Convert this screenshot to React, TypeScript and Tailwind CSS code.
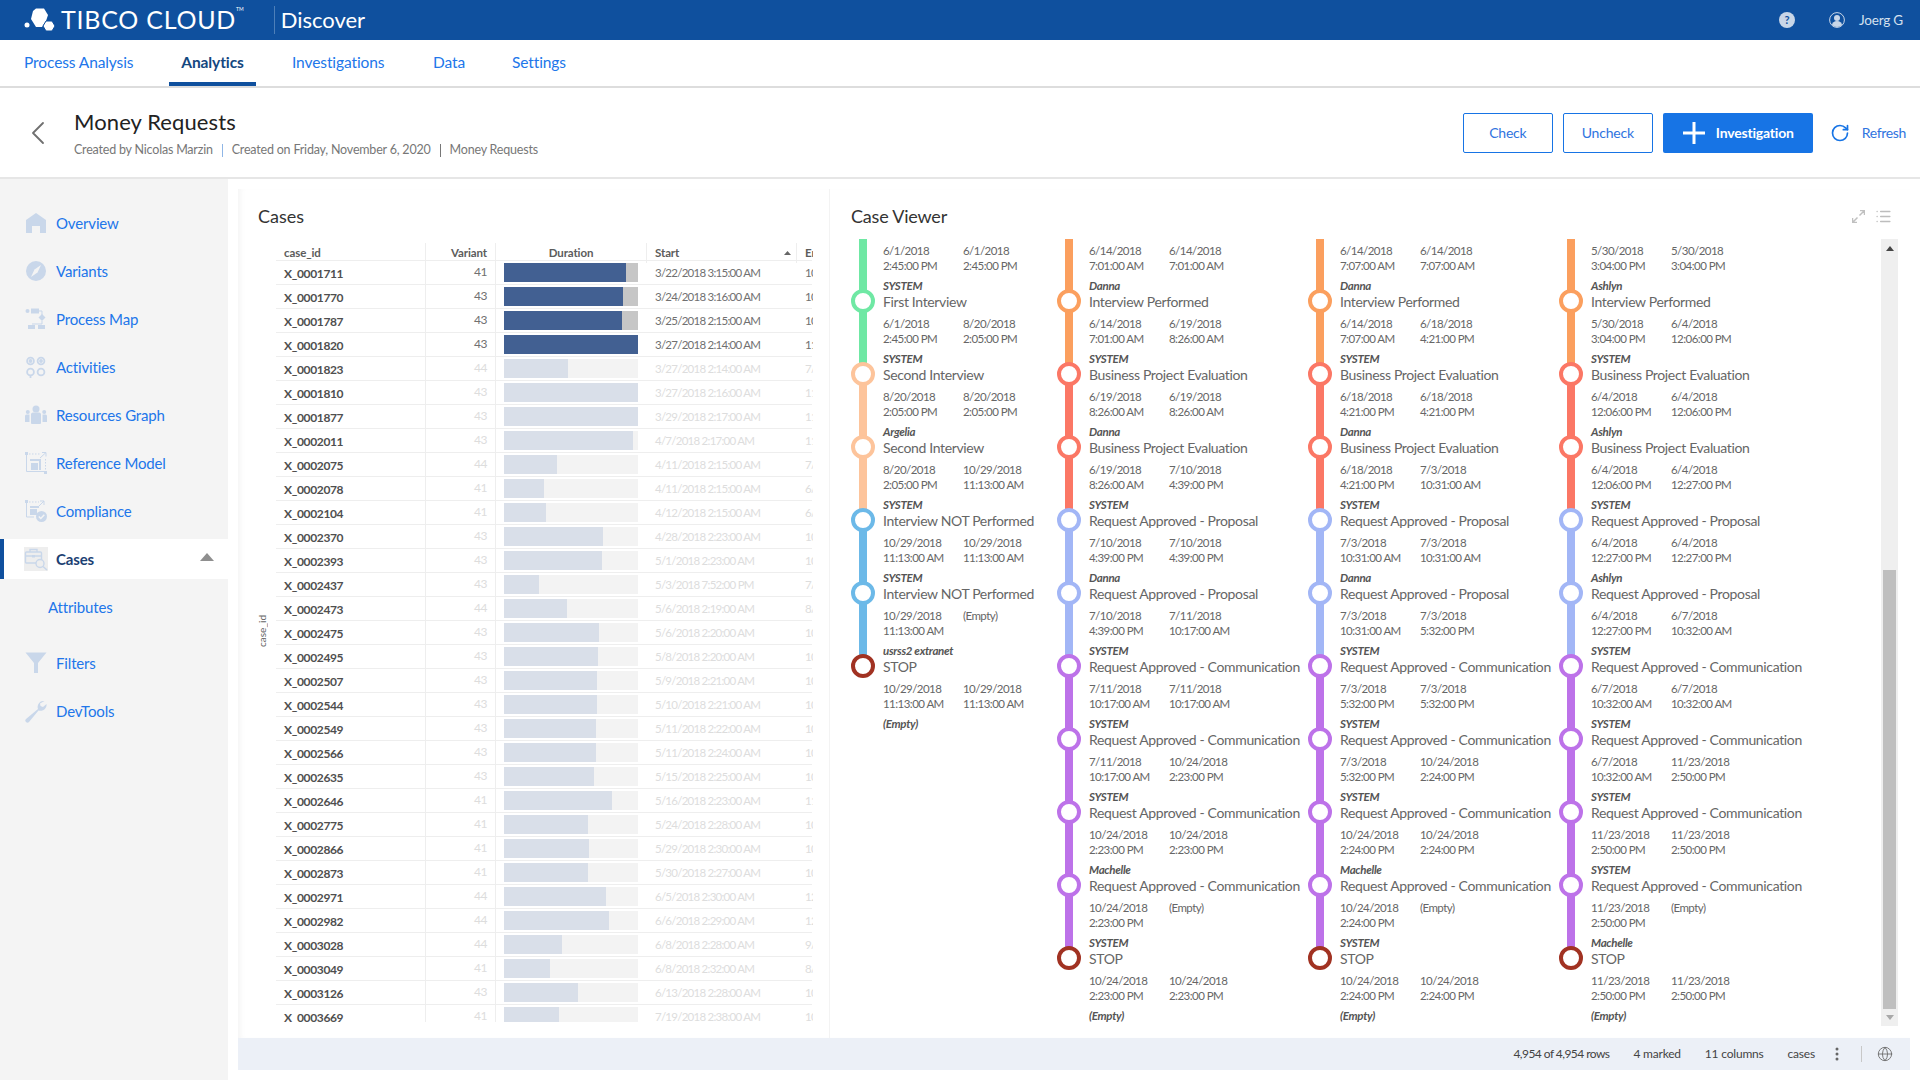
import React from "react";
import { Globe, List, RotateCw, ChevronLeft } from "lucide-react";

const rows: [string, number, number, string, string][] = [
  ["X_0001711", 41, 0.91, "3/22/2018 3:15:00 AM", "10/5/2018"],
  ["X_0001770", 43, 0.89, "3/24/2018 3:16:00 AM", "10/5/2018"],
  ["X_0001787", 43, 0.88, "3/25/2018 2:15:00 AM", "10/5/2018"],
  ["X_0001820", 43, 1, "3/27/2018 2:14:00 AM", "11/5/2018"],
  ["X_0001823", 44, 0.477, "3/27/2018 2:14:00 AM", "7/5/2018"],
  ["X_0001810", 43, 1, "3/27/2018 2:16:00 AM", "11/5/2018"],
  ["X_0001877", 43, 1, "3/29/2018 2:17:00 AM", "11/5/2018"],
  ["X_0002011", 43, 0.963, "4/7/2018 2:17:00 AM", "11/5/2018"],
  ["X_0002075", 44, 0.395, "4/11/2018 2:15:00 AM", "7/5/2018"],
  ["X_0002078", 41, 0.298, "4/11/2018 2:15:00 AM", "6/5/2018"],
  ["X_0002104", 41, 0.314, "4/12/2018 2:15:00 AM", "6/5/2018"],
  ["X_0002370", 43, 0.738, "4/28/2018 2:23:00 AM", "10/5/2018"],
  ["X_0002393", 43, 0.733, "5/1/2018 2:23:00 AM", "10/5/2018"],
  ["X_0002437", 43, 0.262, "5/3/2018 7:52:00 PM", "7/5/2018"],
  ["X_0002473", 44, 0.471, "5/6/2018 2:19:00 AM", "8/5/2018"],
  ["X_0002475", 43, 0.709, "5/6/2018 2:20:00 AM", "10/5/2018"],
  ["X_0002495", 43, 0.702, "5/8/2018 2:20:00 AM", "10/5/2018"],
  ["X_0002507", 43, 0.694, "5/9/2018 2:21:00 AM", "10/5/2018"],
  ["X_0002544", 43, 0.694, "5/10/2018 2:21:00 AM", "10/5/2018"],
  ["X_0002549", 43, 0.686, "5/11/2018 2:22:00 AM", "10/5/2018"],
  ["X_0002566", 43, 0.686, "5/11/2018 2:24:00 AM", "10/5/2018"],
  ["X_0002635", 43, 0.673, "5/15/2018 2:25:00 AM", "10/5/2018"],
  ["X_0002646", 41, 0.806, "5/16/2018 2:23:00 AM", "11/5/2018"],
  ["X_0002775", 41, 0.628, "5/24/2018 2:28:00 AM", "10/5/2018"],
  ["X_0002866", 41, 0.634, "5/29/2018 2:30:00 AM", "10/5/2018"],
  ["X_0002873", 41, 0.628, "5/30/2018 2:27:00 AM", "10/5/2018"],
  ["X_0002971", 44, 0.762, "6/5/2018 2:30:00 AM", "12/5/2018"],
  ["X_0002982", 44, 0.783, "6/6/2018 2:29:00 AM", "12/5/2018"],
  ["X_0003028", 44, 0.432, "6/8/2018 2:28:00 AM", "9/5/2018"],
  ["X_0003049", 41, 0.343, "6/8/2018 2:32:00 AM", "8/5/2018"],
  ["X_0003126", 43, 0.552, "6/13/2018 2:28:00 AM", "10/5/2018"],
  ["X_0003669", 41, 0.411, "7/19/2018 2:38:00 AM", "10/5/2018"],
];

const C = {
  green: "#6fe8a4",
  peach: "#fdc49b",
  blue: "#6cb9e8",
  red: "#a13222",
  orange: "#fb9f5e",
  coral: "#fb7765",
  peri: "#a2b6f6",
  purple: "#bd72e9",
};

type S = { a: string; b: string; c: string; d: string; who: string; act: string; col: string };
const st = (a: string, b: string, c: string, d: string, who: string, act: string, col: string): S => ({ a, b, c, d, who, act, col });
const BPE = "Business Project Evaluation";
const RAP = "Request Approved - Proposal";
const RAC = "Request Approved - Communication";
const IP = "Interview Performed";

const c1: S[] = [
  st("6/1/2018", "2:45:00 PM", "6/1/2018", "2:45:00 PM", "SYSTEM", "First Interview", C.green),
  st("6/1/2018", "2:45:00 PM", "8/20/2018", "2:05:00 PM", "SYSTEM", "Second Interview", C.peach),
  st("8/20/2018", "2:05:00 PM", "8/20/2018", "2:05:00 PM", "Argelia", "Second Interview", C.peach),
  st("8/20/2018", "2:05:00 PM", "10/29/2018", "11:13:00 AM", "SYSTEM", "Interview NOT Performed", C.blue),
  st("10/29/2018", "11:13:00 AM", "10/29/2018", "11:13:00 AM", "SYSTEM", "Interview NOT Performed", C.blue),
  st("10/29/2018", "11:13:00 AM", "(Empty)", "", "usrss2 extranet", "STOP", C.red),
];
const c2: S[] = [
  st("6/14/2018", "7:01:00 AM", "6/14/2018", "7:01:00 AM", "Danna", IP, C.orange),
  st("6/14/2018", "7:01:00 AM", "6/19/2018", "8:26:00 AM", "SYSTEM", BPE, C.coral),
  st("6/19/2018", "8:26:00 AM", "6/19/2018", "8:26:00 AM", "Danna", BPE, C.coral),
  st("6/19/2018", "8:26:00 AM", "7/10/2018", "4:39:00 PM", "SYSTEM", RAP, C.peri),
  st("7/10/2018", "4:39:00 PM", "7/10/2018", "4:39:00 PM", "Danna", RAP, C.peri),
  st("7/10/2018", "4:39:00 PM", "7/11/2018", "10:17:00 AM", "SYSTEM", RAC, C.purple),
  st("7/11/2018", "10:17:00 AM", "7/11/2018", "10:17:00 AM", "SYSTEM", RAC, C.purple),
  st("7/11/2018", "10:17:00 AM", "10/24/2018", "2:23:00 PM", "SYSTEM", RAC, C.purple),
  st("10/24/2018", "2:23:00 PM", "10/24/2018", "2:23:00 PM", "Machelle", RAC, C.purple),
  st("10/24/2018", "2:23:00 PM", "(Empty)", "", "SYSTEM", "STOP", C.red),
];
const c3: S[] = [
  st("6/14/2018", "7:07:00 AM", "6/14/2018", "7:07:00 AM", "Danna", IP, C.orange),
  st("6/14/2018", "7:07:00 AM", "6/18/2018", "4:21:00 PM", "SYSTEM", BPE, C.coral),
  st("6/18/2018", "4:21:00 PM", "6/18/2018", "4:21:00 PM", "Danna", BPE, C.coral),
  st("6/18/2018", "4:21:00 PM", "7/3/2018", "10:31:00 AM", "SYSTEM", RAP, C.peri),
  st("7/3/2018", "10:31:00 AM", "7/3/2018", "10:31:00 AM", "Danna", RAP, C.peri),
  st("7/3/2018", "10:31:00 AM", "7/3/2018", "5:32:00 PM", "SYSTEM", RAC, C.purple),
  st("7/3/2018", "5:32:00 PM", "7/3/2018", "5:32:00 PM", "SYSTEM", RAC, C.purple),
  st("7/3/2018", "5:32:00 PM", "10/24/2018", "2:24:00 PM", "SYSTEM", RAC, C.purple),
  st("10/24/2018", "2:24:00 PM", "10/24/2018", "2:24:00 PM", "Machelle", RAC, C.purple),
  st("10/24/2018", "2:24:00 PM", "(Empty)", "", "SYSTEM", "STOP", C.red),
];
const c4: S[] = [
  st("5/30/2018", "3:04:00 PM", "5/30/2018", "3:04:00 PM", "Ashlyn", IP, C.orange),
  st("5/30/2018", "3:04:00 PM", "6/4/2018", "12:06:00 PM", "SYSTEM", BPE, C.coral),
  st("6/4/2018", "12:06:00 PM", "6/4/2018", "12:06:00 PM", "Ashlyn", BPE, C.coral),
  st("6/4/2018", "12:06:00 PM", "6/4/2018", "12:27:00 PM", "SYSTEM", RAP, C.peri),
  st("6/4/2018", "12:27:00 PM", "6/4/2018", "12:27:00 PM", "Ashlyn", RAP, C.peri),
  st("6/4/2018", "12:27:00 PM", "6/7/2018", "10:32:00 AM", "SYSTEM", RAC, C.purple),
  st("6/7/2018", "10:32:00 AM", "6/7/2018", "10:32:00 AM", "SYSTEM", RAC, C.purple),
  st("6/7/2018", "10:32:00 AM", "11/23/2018", "2:50:00 PM", "SYSTEM", RAC, C.purple),
  st("11/23/2018", "2:50:00 PM", "11/23/2018", "2:50:00 PM", "SYSTEM", RAC, C.purple),
  st("11/23/2018", "2:50:00 PM", "(Empty)", "", "Machelle", "STOP", C.red),
];

function Dates({ a, b, c, d }: { a: string; b: string; c: string; d: string }) {
  return (
    <div className="grid grid-cols-[80px_80px] pt-[4px] text-[11.5px] leading-[15px] tracking-[-0.55px] text-[#666666] whitespace-nowrap">
      <div>{a}<br />{b}</div>
      <div>{c}<br />{d}</div>
    </div>
  );
}

function Timeline({ steps, w, end }: { steps: S[]; w: string; end: [string, string, string, string] }) {
  return (
    <div className={`${w} shrink-0`}>
      {steps.map((s, i) => {
        const prev = i === 0 ? s.col : steps[i - 1].col;
        const stop = s.act === "STOP";
        return (
          <div key={i} className="flex h-[73px]">
            <div className="relative w-6 shrink-0 flex flex-col items-center">
              <div className="w-2 h-[62px]" style={{ background: prev }} />
              {!stop && <div className="w-2 flex-1" style={{ background: s.col }} />}
              <div className="absolute left-0 top-[50px] size-6 rounded-full border-4 bg-white" style={{ borderColor: s.col }} />
            </div>
            <div className="ml-2 min-w-0">
              <Dates a={s.a} b={s.b} c={s.c} d={s.d} />
              <div className="mt-[5px] text-[11.5px] leading-[16px] font-bold italic tracking-[-0.3px] text-[#555555] whitespace-nowrap">{s.who}</div>
              <div className="text-[14px] leading-[16px] tracking-[-0.35px] text-[#666666] whitespace-nowrap">{s.act}</div>
            </div>
          </div>
        );
      })}
      <div className="ml-8">
        <Dates a={end[0]} b={end[1]} c={end[2]} d={end[3]} />
        <div className="mt-[5px] text-[11.5px] leading-[16px] font-bold italic tracking-[-0.3px] text-[#555555]">(Empty)</div>
      </div>
    </div>
  );
}

const ic = "#c9d7ea";
const icons: Record<string, React.ReactNode> = {
  home: <path d="M12 2 L22 9 V22 H16 V15 H8 V22 H2 V9 Z" fill={ic} />,
  compass: (
    <g>
      <circle cx="12" cy="12" r="10" fill={ic} />
      <path d="M17 6 L13.5 13.5 L7 18 L10.5 10.5 Z" fill="#f4f4f4" />
    </g>
  ),
  map: (
    <g fill={ic}>
      <circle cx="3.5" cy="4" r="2" />
      <rect x="7" y="1.5" width="8" height="5" />
      <path d="M14 4 h4 v4" stroke={ic} fill="none" />
      <path d="M18 7 l3.5 3.5 -3.5 3.5 -3.5 -3.5 z" />
      <path d="M18 14 v3 M8 17 h10" stroke={ic} fill="none" />
      <rect x="4" y="18" width="7" height="4" />
      <rect x="14" y="18" width="7" height="4" />
    </g>
  ),
  act: (
    <g fill="none" stroke={ic} strokeWidth="1.8">
      <circle cx="6.5" cy="6" r="3.4" />
      <circle cx="17" cy="6" r="3.4" />
      <circle cx="6.5" cy="17" r="3.4" />
      <circle cx="17" cy="17" r="3.4" />
      <circle cx="6.5" cy="6" r="1" fill={ic} />
      <circle cx="17" cy="6" r="1" fill={ic} />
      <path d="M6.5 20.5 V23" />
    </g>
  ),
  people: (
    <g fill={ic}>
      <circle cx="12" cy="6" r="3.5" />
      <path d="M7 11 a2 2 0 0 1 2 -1.5 h6 a2 2 0 0 1 2 1.5 v9 a1 1 0 0 1 -1 1 h-8 a1 1 0 0 1 -1 -1 z" />
      <circle cx="3.8" cy="9" r="2" />
      <circle cx="20.2" cy="9" r="2" />
      <path d="M1 13 a1.5 1.5 0 0 1 1.5 -1.5 h3 V19 H1 z M18.5 11.5 h3 a1.5 1.5 0 0 1 1.5 1.5 V19 h-4.5 z" />
    </g>
  ),
  ref: (
    <g>
      <rect x="1" y="1" width="3" height="3" fill={ic} />
      <rect x="20" y="20" width="3" height="3" fill={ic} />
      <path d="M2.5 4 V20.5 H20" fill="none" stroke={ic} />
      <path d="M5 3 H17 M21.5 8 V19" fill="none" stroke={ic} strokeDasharray="1.5 1.5" />
      <path d="M16 7 L22 1.5 M18 1.5 H22 V5.5" fill="none" stroke={ic} />
      <path d="M6 8 H17 V19 H15 V10 H6 Z" fill={ic} />
      <rect x="7" y="12" width="7" height="7" fill={ic} />
    </g>
  ),
  comp: (
    <g>
      <rect x="1" y="1" width="3" height="3" fill={ic} />
      <path d="M2.5 4 V18 H10" fill="none" stroke={ic} />
      <path d="M5 3 H15" fill="none" stroke={ic} strokeDasharray="1.5 1.5" />
      <path d="M14 8 L20 2 M16 2 H20 V6" fill="none" stroke={ic} />
      <rect x="6" y="7" width="9" height="2" fill={ic} />
      <rect x="6" y="10" width="7" height="6" fill={ic} />
      <circle cx="17.5" cy="17.5" r="5.5" fill={ic} />
      <path d="M14.8 17.5 L16.8 19.5 L20.3 15.7" fill="none" stroke="#f4f4f4" strokeWidth="1.5" />
    </g>
  ),
  cases: (
    <g>
      <rect width="24" height="24" fill="#eeeeee" />
      <rect x="1.5" y="5" width="16" height="11" rx="1" fill="none" stroke={ic} strokeWidth="1.4" />
      <path d="M6 5 V2.5 H13 V5 M1.5 9 H17.5" fill="none" stroke={ic} strokeWidth="1.4" />
      <rect x="8" y="8" width="3" height="2.5" fill={ic} />
      <circle cx="16" cy="16.5" r="4" fill="#eeeeee" stroke={ic} strokeWidth="1.4" />
      <path d="M19 19.5 L23 23" stroke={ic} strokeWidth="1.6" />
    </g>
  ),
  filter: <path d="M1.5 1.5 H22.5 L14 12 V22 H10 V12 Z" fill={ic} />,
  wrench: (
    <path d="M20.5 2 a6 6 0 0 0 -6.5 8 L2 20 a2 2 0 0 0 3 3 L14.5 11.5 a6 6 0 0 0 8 -6.5 L19 8 L16.5 7 L16 4.5 Z" fill={ic} />
  ),
};

function NavItem({ icon, label, active }: { icon: string; label: string; active?: boolean }) {
  return (
    <div className="h-12 py-1">
      <div className={`flex items-center h-10 ${active ? "bg-white border-l-4 border-[#0f509e] pl-5" : "pl-6"}`}>
        <svg width="24" height="24" viewBox="0 0 24 24" className="shrink-0">{icons[icon]}</svg>
        <span className={`ml-[8px] text-[15px] tracking-[-0.15px] ${active ? "font-bold text-[#1c3f73]" : "text-[#2176ea]"}`}>{label}</span>
        {active && (
          <svg width="14" height="8" viewBox="0 0 14 8" className="ml-auto mr-[14px] mb-1"><path d="M7 0 L14 8 H0 Z" fill="#8f8f8f" /></svg>
        )}
      </div>
    </div>
  );
}

function Logo() {
  return (
    <svg width="34" height="24" viewBox="0 0 34 24" className="shrink-0">
      <path d="M9 3 L12 0.5 H20 L24 7 L22 13 L18 19 H12 L7 11 Z" fill="#fff" />
      <path d="M22 13 H28 L31 18 L28 23 H22 L19 18 Z" fill="#fff" stroke="#0f509e" strokeWidth="1" />
      <circle cx="3" cy="17" r="2.5" fill="#fff" />
    </svg>
  );
}

export default function App() {
  return (
    <div className="w-[1920px] h-[1080px] overflow-hidden flex flex-col bg-white [font-family:Lato,'Noto_Sans',sans-serif]">
      {/* Top bar */}
      <header className="h-10 shrink-0 bg-[#0f509e] flex items-center pl-6 pr-[17px] text-white">
        <Logo />
        <div className="ml-[3px] -mt-[2px] flex items-start">
          <span className="text-[25px] leading-none tracking-[0.75px] whitespace-nowrap">TIBCO CLOUD</span>
          <span className="text-[5px] leading-none">TM</span>
        </div>
        <div className="ml-[30px] h-7 w-px bg-[#4d7fb9]" />
        <span className="ml-[6px] -mt-[1px] text-[22px] tracking-[0px]">Discover</span>
        <div className="ml-auto flex items-center">
          <span className="size-4 rounded-full bg-[#c8d6e8] text-[#0f509e] text-[11px] font-bold flex items-center justify-center">?</span>
          <svg width="16" height="16" viewBox="0 0 16 16" className="ml-[34px]">
            <circle cx="8" cy="8" r="7.4" fill="none" stroke="#c8d6e8" strokeWidth="1" />
            <circle cx="8" cy="6" r="3" fill="#c8d6e8" />
            <path d="M3 13 a5 4 0 0 1 10 0 a7 7 0 0 1 -10 0 Z" fill="#c8d6e8" />
          </svg>
          <span className="ml-[14px] text-[13.5px] tracking-[-0.2px] text-[#d5e0ee]">Joerg G</span>
        </div>
      </header>

      {/* Tabs */}
      <nav className="h-[46px] shrink-0 flex items-stretch pl-6 text-[15.5px] tracking-[-0.1px] text-[#2176ea] border-b-2 border-[#dddddd] box-content">
        <div className="flex items-center w-[109px] whitespace-nowrap">Process Analysis</div>
        <div className="ml-9 w-[87px] flex items-center justify-center font-bold pt-[4px] text-[#14477f] border-b-4 border-[#0f509e]">Analytics</div>
        <div className="ml-9 flex items-center w-[93px] whitespace-nowrap">Investigations</div>
        <div className="ml-12 flex items-center w-[31px]">Data</div>
        <div className="ml-12 flex items-center">Settings</div>
      </nav>

      {/* Title strip */}
      <section className="h-[91px] shrink-0 flex items-center border-b-2 border-[#e6e6e6] pr-[14px]">
        <ChevronLeft className="ml-[18px] shrink-0" size={40} strokeWidth={1.1} color="#707070" />
        <div className="ml-[16px]">
          <div className="text-[22px] leading-[30px] tracking-[0.1px] text-[#222222]">Money Requests</div>
          <div className="mt-[5px] flex items-center text-[12.5px] leading-[16px] tracking-[-0.2px] text-[#777777]">
            <span>Created by Nicolas Marzin</span>
            <span className="mx-[9px] w-px h-[13px] bg-[#8fb6e6]" />
            <span>Created on Friday, November 6, 2020</span>
            <span className="mx-[9px] w-px h-[13px] bg-[#777777]" />
            <span>Money Requests</span>
          </div>
        </div>
        <div className="ml-auto flex items-center gap-[10px] text-[14px] tracking-[-0.2px]">
          <button className="w-[90px] h-10 rounded-[2px] border border-[#1774e5] text-[#2f74e0]">Check</button>
          <button className="w-[90px] h-10 rounded-[2px] border border-[#1774e5] text-[#2f74e0]">Uncheck</button>
          <button className="w-[150px] h-10 rounded-[2px] bg-[#1774e5] text-white font-bold flex items-center pl-[20px]">
            <svg width="22" height="22" viewBox="0 0 22 22" className="shrink-0"><path d="M11 0 V22 M0 11 H22" stroke="#fff" strokeWidth="3" /></svg>
            <span className="ml-[11px]">Investigation</span>
          </button>
          <RotateCw className="ml-[7px]" size={20} strokeWidth={2} color="#1774e5" />
          <span className="ml-[2px] tracking-[-0.35px] text-[#2f74e0]">Refresh</span>
        </div>
      </section>

      {/* Body */}
      <div className="flex-1 min-h-0 flex">
        <aside className="w-[228px] shrink-0 bg-[#f4f4f4] pt-5">
          <NavItem icon="home" label="Overview" />
          <NavItem icon="compass" label="Variants" />
          <NavItem icon="map" label="Process Map" />
          <NavItem icon="act" label="Activities" />
          <NavItem icon="people" label="Resources Graph" />
          <NavItem icon="ref" label="Reference Model" />
          <NavItem icon="comp" label="Compliance" />
          <NavItem icon="cases" label="Cases" active />
          <div className="h-12 flex items-center pl-12 text-[15px] tracking-[-0.15px] text-[#2176ea]">Attributes</div>
          <div className="h-2" />
          <NavItem icon="filter" label="Filters" />
          <NavItem icon="wrench" label="DevTools" />
        </aside>

        <main className="flex-1 min-w-0 pl-[10px] pr-[10px] pb-[10px] flex flex-col">
          <div className="flex-1 min-h-0 flex mt-[10px] shadow-[inset_6px_0_6px_-4px_rgba(0,0,0,0.05)]">
            {/* Cases */}
            <div className="w-[592px] shrink-0 border-r border-[#f3f3f3] flex flex-col">
              <div className="h-[54px] shrink-0 pl-[20px] pt-[16px] text-[18px] leading-[22px] text-[#333333]">Cases</div>
              <div className="h-[779px] flex overflow-hidden">
                <div className="w-[38px] shrink-0 flex items-center justify-center">
                  <span className="[writing-mode:vertical-rl] rotate-180 text-[10px] text-[#666666] ml-[10px] mt-[-4px]">case_id</span>
                </div>
                <div className="w-[536px] shrink-0 text-[12px]">
                  <div className="grid grid-cols-[150px_70px_151px_150px_16px] h-[18px] border-b-[1px] border-[#eeeeee] font-bold text-[#5c5c5c] text-[11.5px] leading-[20px] tracking-[-0.1px]">
                    <div className="pl-2 border-r border-[#eeeeee]">case_id</div>
                    <div className="pr-2 text-right border-r border-[#eeeeee]">Variant</div>
                    <div className="text-center border-r border-[#eeeeee]">Duration</div>
                    <div className="pl-2 border-r border-[#eeeeee] flex items-center justify-between pr-[5px]">
                      <span>Start</span>
                      <svg width="7" height="4" viewBox="0 0 7 4"><path d="M3.5 0 L7 4 H0 Z" fill="#666" /></svg>
                    </div>
                    <div className="pl-2 overflow-hidden">End</div>
                  </div>
                  {rows.map((r, i) => {
                    const marked = i < 4;
                    return (
                      <div key={r[0]} className="grid grid-cols-[150px_70px_151px_150px_16px] h-6 border-b border-[#eeeeee] items-stretch">
                        <div className="pl-2 border-r border-[#eeeeee] font-bold text-[12px] tracking-[-0.35px] text-[#4f4f4f] flex items-center pt-[2px]">{r[0]}</div>
                        <div className={`pr-2 text-right border-r border-[#eeeeee] text-[12px] tracking-[-0.4px] leading-[22px] ${marked ? "text-[#707070]" : "text-[#dddddd]"}`}>{r[1]}</div>
                        <div className="pl-2 pr-2 pt-[2px] pb-[2px]">
                          <div className={`h-full w-[134px] ${marked ? "bg-[#c6c6c6]" : "bg-[#f3f3f3]"}`}>
                            <div className={`h-full ${marked ? "bg-[#426092]" : "bg-[#d9dfe9]"}`} style={{ width: `${r[2] * 100}%` }} />
                          </div>
                        </div>
                        <div className={`pl-2 text-[11.5px] tracking-[-0.75px] leading-[23px] whitespace-nowrap ${marked ? "text-[#707070]" : "text-[#dddddd]"}`}>{r[3]}</div>
                        <div className={`pl-2 overflow-hidden text-[11.5px] tracking-[-0.6px] leading-[23px] whitespace-nowrap ${marked ? "text-[#707070]" : "text-[#dddddd]"}`}>{r[4]}</div>
                      </div>
                    );
                  })}
                </div>
              </div>
            </div>

            {/* Case Viewer */}
            <div className="flex-1 min-w-0 flex flex-col pl-[21px]">
              <div className="h-[50px] shrink-0 pt-[16px] flex items-start justify-between pr-[18px]">
                <span className="text-[18px] leading-[22px] tracking-[-0.2px] text-[#333333]">Case Viewer</span>
                <div className="flex items-center gap-[10px] mt-[3px]">
                  <svg width="13" height="13" viewBox="0 0 13 13"><path d="M7.5 5.5 L12.5 .5 M8 .5 H12.5 V5 M5.5 7.5 L.5 12.5 M.5 8 V12.5 H5" fill="none" stroke="#c0c0c0" strokeWidth="1.5" /></svg>
                  <List size={17} strokeWidth={2} color="#bdbdbd" />
                </div>
              </div>
              <div className="h-[787px] flex">
                <div className="w-[1030px] shrink-0 flex items-start overflow-hidden">
                  <Timeline steps={c1} w="w-[206px]" end={["10/29/2018", "11:13:00 AM", "10/29/2018", "11:13:00 AM"]} />
                  <Timeline steps={c2} w="w-[251px]" end={["10/24/2018", "2:23:00 PM", "10/24/2018", "2:23:00 PM"]} />
                  <Timeline steps={c3} w="w-[251px]" end={["10/24/2018", "2:24:00 PM", "10/24/2018", "2:24:00 PM"]} />
                  <Timeline steps={c4} w="w-[251px]" end={["11/23/2018", "2:50:00 PM", "11/23/2018", "2:50:00 PM"]} />
                </div>
                <div className="w-[17px] shrink-0 bg-[#efefef] flex flex-col items-center">
                  <svg width="8" height="5" viewBox="0 0 8 5" className="mt-[7px]"><path d="M4 0 L8 5 H0 Z" fill="#444" /></svg>
                  <div className="h-[319px] shrink-0" />
                  <div className="w-[13px] flex-1 bg-[#bfbfbf]" />
                  <svg width="8" height="5" viewBox="0 0 8 5" className="my-[6px]"><path d="M4 5 L8 0 H0 Z" fill="#a8a8a8" /></svg>
                </div>
              </div>
            </div>
          </div>

          {/* Status bar */}
          <footer className="h-8 shrink-0 bg-[#ecf0f7] flex items-center justify-end text-[12px] tracking-[-0.2px] text-[#444444] pr-[17px]">
            <span className="tracking-[-0.55px]">4,954 of 4,954 rows</span>
            <span className="ml-6">4 marked</span>
            <span className="ml-6">11 columns</span>
            <span className="ml-6">cases</span>
            <svg width="4" height="14" viewBox="0 0 4 14" className="ml-[20px]">
              <circle cx="2" cy="2" r="1.5" fill="#666" />
              <circle cx="2" cy="7" r="1.5" fill="#666" />
              <circle cx="2" cy="12" r="1.5" fill="#666" />
            </svg>
            <span className="ml-[22px] w-px h-4 bg-[#c8c8c8]" />
            <Globe className="ml-[15px]" size={16} strokeWidth={1.4} color="#707070" />
          </footer>
        </main>
      </div>
    </div>
  );
}
